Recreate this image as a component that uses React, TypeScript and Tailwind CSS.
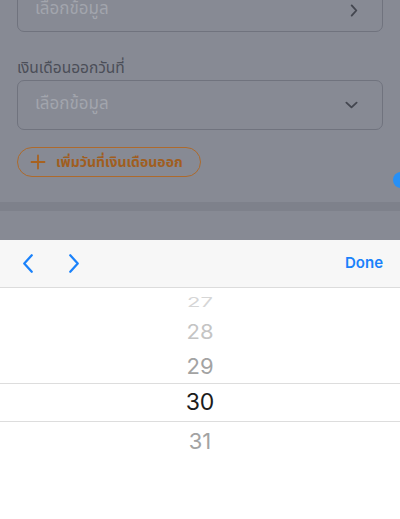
import React from 'react';

const thai = { fontFamily: '"Noto Sans Thai", "Noto Sans", "Liberation Sans", sans-serif' };
const ui = { fontFamily: 'Inter, "Liberation Sans", sans-serif' };

function ChevronRight({ className, sw = 2 }: { className?: string; sw?: number }) {
  return (
    <svg viewBox="0 0 8 14" className={className} fill="none" stroke="currentColor" strokeWidth={sw} strokeLinecap="round" strokeLinejoin="round">
      <path d="M1.5 1.5L6.5 7L1.5 12.5" />
    </svg>
  );
}

function ChevronDown({ className }: { className?: string }) {
  return (
    <svg viewBox="0 0 14 8" className={className} fill="none" stroke="currentColor" strokeWidth={2} strokeLinecap="round" strokeLinejoin="round">
      <path d="M1.5 1.5L7 6.5L12.5 1.5" />
    </svg>
  );
}

function SelectBox({ children, icon, h = 'h-[50px]' }: { children: React.ReactNode; icon: React.ReactNode; h?: string }) {
  return (
    <div className={`${h} rounded-[7px] border border-[#70737e] flex items-center justify-between pl-[17px] pr-[24px]`}>
      <span className="text-[17px] text-[#a2a5ad]" style={thai}>{children}</span>
      {icon}
    </div>
  );
}

export default function App() {
  const rows = [
    { n: '27', h: 'h-[28px]', c: 'text-[#d6d6d6]', s: 'scale-y-[0.6]' },
    { n: '28', h: 'h-[32px]', c: 'text-[#c4c4c4]', s: 'scale-y-[0.9]' },
    { n: '29', h: 'h-[35px]', c: 'text-[#a3a3a3]', s: '' },
  ];

  return (
    <div className="w-[400px] h-[519px] overflow-hidden bg-white">
      <div className="relative h-[240px] overflow-hidden bg-[#878a94]">
        <div className="px-[17px]">
          <div className="-mt-[12px]">
            <SelectBox h="h-[44px]" icon={<ChevronRight className="w-[8px] h-[13px] text-[#43464f]" />}>เลือกข้อมูล</SelectBox>
          </div>
          <div className="mt-[26px] text-[15.5px] leading-[22px] text-[#4b4e58]" style={thai}>
            เงินเดือนออกวันที่
          </div>
          <div>
            <SelectBox icon={<ChevronDown className="w-[13px] h-[8px] text-[#43464f]" />}>เลือกข้อมูล</SelectBox>
          </div>
          <div className="mt-[17px] inline-flex h-[30px] items-center gap-[10px] rounded-full border border-[#ad6a2c] pl-[12px] pr-[17px]">
            <svg viewBox="0 0 16 16" className="w-[16px] h-[16px] text-[#a8621f]" fill="none" stroke="currentColor" strokeWidth={1.8} strokeLinecap="round">
              <path d="M8 1.5V14.5M1.5 8H14.5" />
            </svg>
            <span className="text-[14px] font-bold text-[#a05e1f]" style={thai}>เพิ่มวันที่เงินเดือนออก</span>
          </div>
        </div>
        <div className="mt-[25px] h-[9px] bg-[#7e818b]" />
        <div className="absolute left-[393px] top-[172px] w-[16px] h-[16px] rounded-full bg-[#2790f6]" />
      </div>

      <div className="h-[48px] bg-[#f7f7f7] border-b border-[#dcdcdc] flex items-center pl-[22px] pr-[17px]">
        <ChevronRight sw={1.5} className="w-[12px] h-[21px] text-[#1a82fb] rotate-180" />
        <ChevronRight sw={1.5} className="ml-[34px] w-[12px] h-[21px] text-[#1a82fb]" />
        <span className="ml-auto text-[15px] font-semibold text-[#1a82fb]" style={ui}>Done</span>
      </div>

      <div className="bg-white" style={ui}>
        {rows.map((r) => (
          <div key={r.n} className={`${r.h} flex items-center justify-center`}>
            <span className={`text-[22px] leading-none ${r.c} ${r.s}`}>{r.n}</span>
          </div>
        ))}
        <div className="h-[39px] border-y border-[#dddddd] flex items-center justify-center">
          <span className="text-[23px] leading-none text-[#1c1c1c]">30</span>
        </div>
        <div className="h-[38px] flex items-center justify-center">
          <span className="text-[22px] leading-none text-[#a3a3a3]">31</span>
        </div>
      </div>
    </div>
  );
}
